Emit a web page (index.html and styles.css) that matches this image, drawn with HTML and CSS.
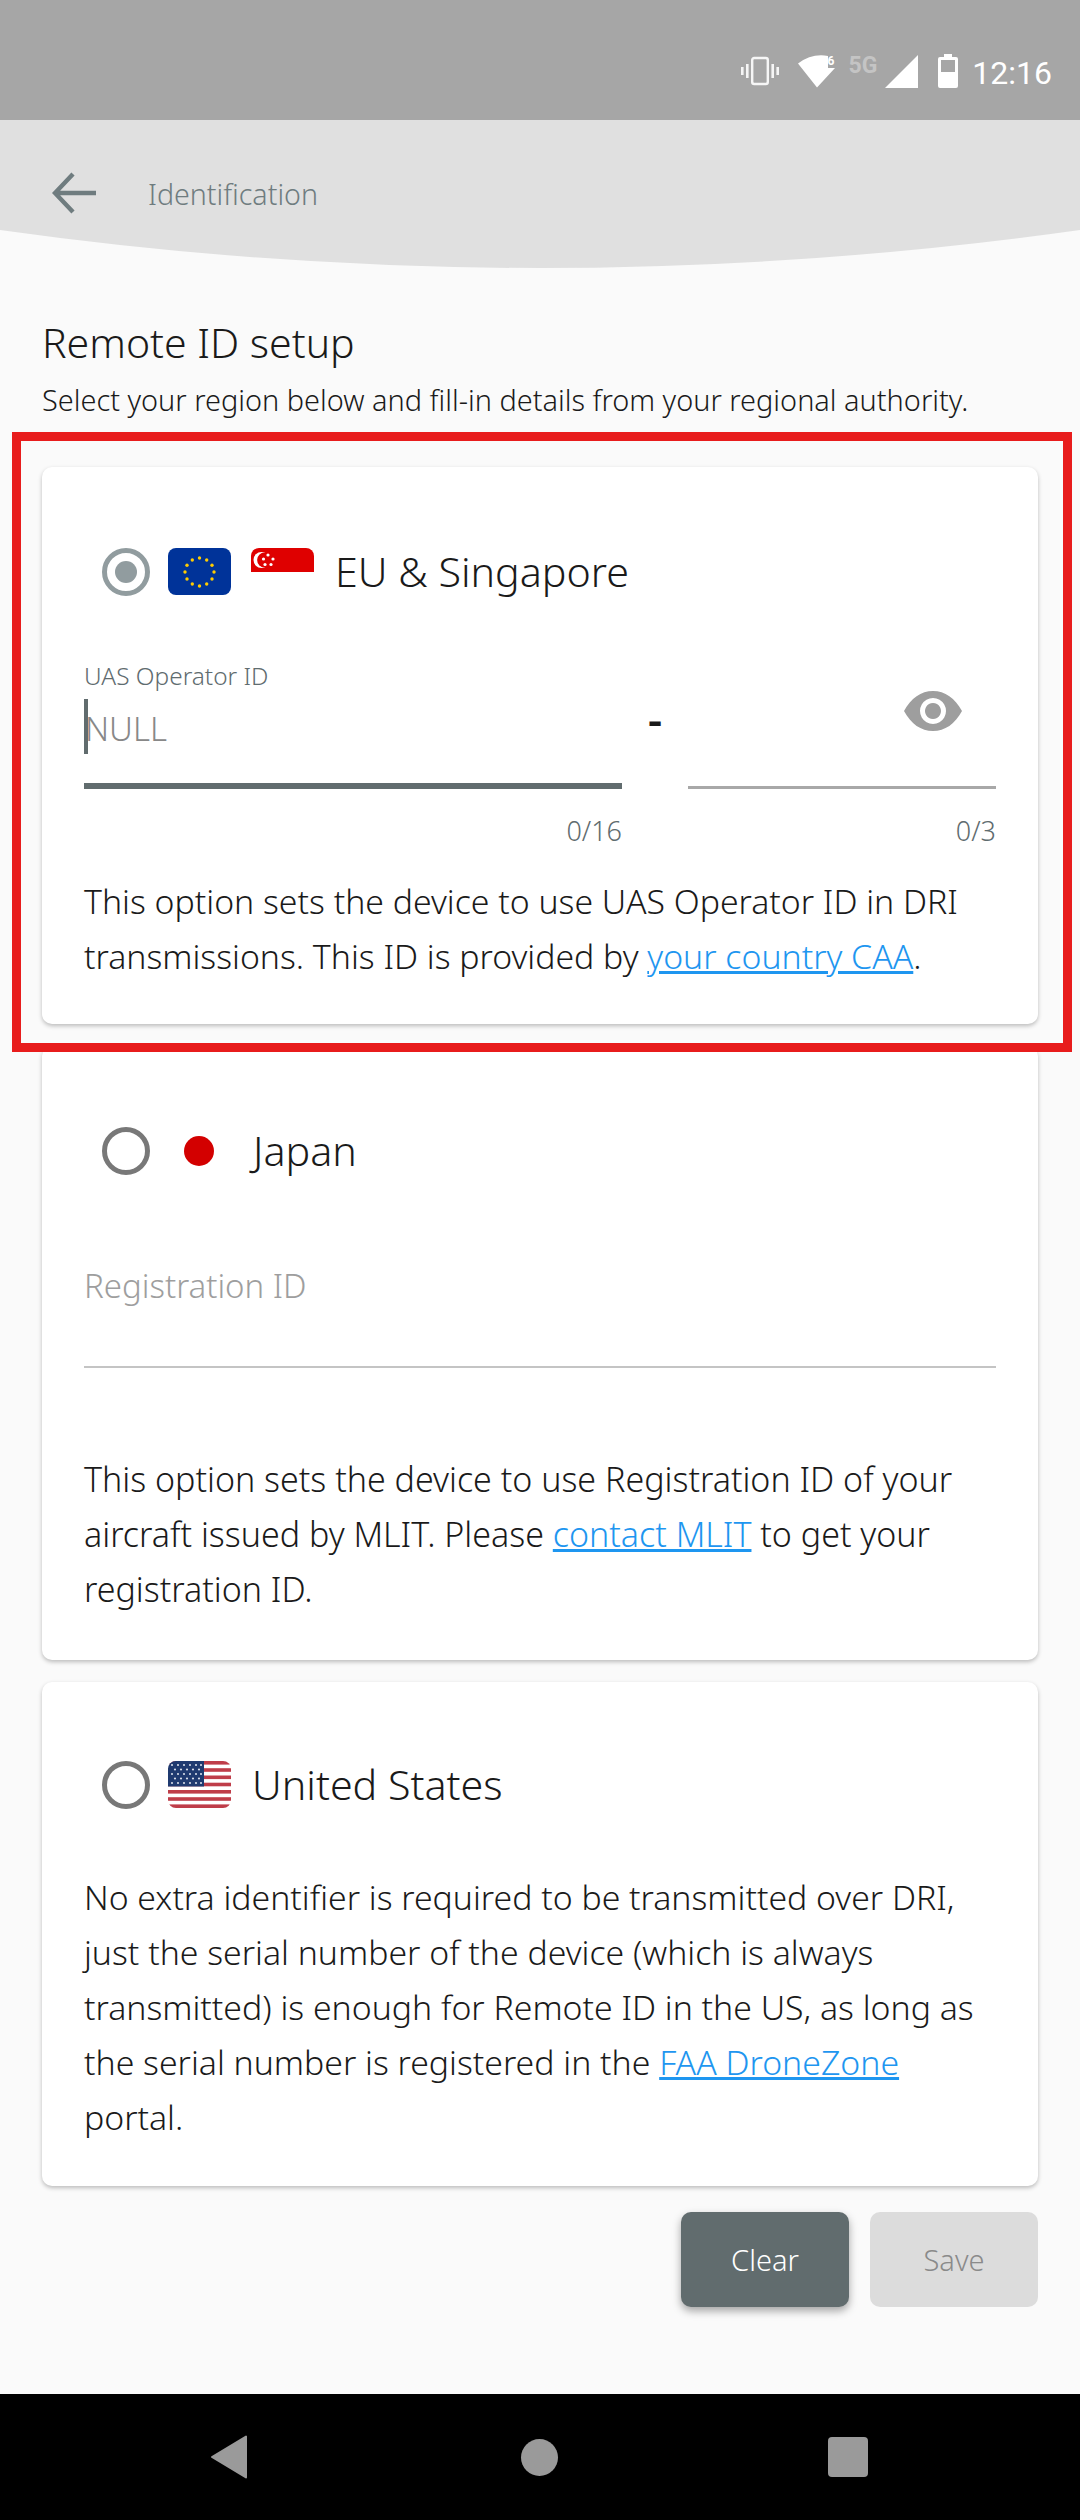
FILE: index.html
```html
<!DOCTYPE html>
<html lang="en">
<head>
<meta charset="utf-8">
<title>Remote ID setup</title>
<link rel="stylesheet" href="styles.css">
</head>
<body>
<div class="phone">
  <div class="statusbar">
    <svg class="st-vib" viewBox="0 0 38 30" width="38" height="30"><g fill="none" stroke="#fff" stroke-width="2.4" opacity=".9"><rect x="11.2" y="2" width="15.6" height="26" rx="2"/></g><g fill="#fff" opacity=".9"><rect x="5" y="8" width="2.6" height="14"/><rect x="0" y="11" width="2.6" height="8"/><rect x="30.4" y="8" width="2.6" height="14"/><rect x="35.4" y="11" width="2.6" height="8"/></g></svg>
    <svg class="st-wifi" viewBox="0 0 38 33" width="38" height="33"><path d="M0 8.500 Q14 -2 30 1 V13 H37 L19 32.500 Z" fill="#fff"/></svg>
    <span class="st-six">6</span>
    <span class="st-5g">5G</span>
    <svg class="st-signal" viewBox="0 0 33 33" width="33" height="33"><path d="M33 0V33H0Z" fill="#fff"/></svg>
    <svg class="st-batt" viewBox="0 0 20 34" width="20" height="34"><path d="M6 0h8v3h4a2 2 0 0 1 2 2v27a2 2 0 0 1-2 2H2a2 2 0 0 1-2-2V5a2 2 0 0 1 2-2h4z" fill="#fff"/><rect x="3" y="6" width="14" height="12" fill="#a6a6a6"/></svg>
    <span class="st-time">12:16</span>
  </div>
  <header class="appbar">
    <svg class="back" viewBox="0 0 44 44" width="44" height="44"><path d="M21 3 L3 22 L21 41 M3 22 H44" fill="none" stroke="#6f7c7f" stroke-width="4.4"/></svg>
    <span class="appbar-title">Identification</span>
  </header>
  <svg class="curve" viewBox="0 0 1080 38" width="1080" height="38" preserveAspectRatio="none"><path d="M0 0 Q540 76 1080 0 V0 H0Z" fill="#e0e0e0"/></svg>
  <main class="content">
    <h1 class="heading">Remote ID setup</h1>
    <p class="sub">Select your region below and fill-in details from your regional authority.</p>

    <section class="card card-eu">
      <div class="card-head">
        <span class="radio radio-on"></span>
        <svg class="flag" viewBox="0 0 63 47" width="63" height="47"><rect width="63" height="47" rx="8" fill="#003399"/><g fill="#ffcc00"><circle cx="31.5" cy="10" r="1.7"/><circle cx="38.7" cy="12" r="1.7"/><circle cx="44" cy="17.2" r="1.7"/><circle cx="46" cy="24" r="1.7"/><circle cx="44" cy="31" r="1.7"/><circle cx="38.7" cy="36" r="1.7"/><circle cx="31.5" cy="38" r="1.7"/><circle cx="24.3" cy="36" r="1.7"/><circle cx="19" cy="31" r="1.7"/><circle cx="17" cy="24" r="1.7"/><circle cx="19" cy="17.2" r="1.7"/><circle cx="24.3" cy="12" r="1.7"/></g></svg>
        <svg class="flag flag-sg" viewBox="0 0 63 47" width="63" height="47"><path d="M0 24V8a8 8 0 0 1 8-8h47a8 8 0 0 1 8 8v16z" fill="#df0000"/><circle cx="10.5" cy="12" r="8" fill="#fff"/><circle cx="13.5" cy="12" r="7.4" fill="#df0000"/><g fill="#fff"><circle cx="17" cy="7" r="1.6"/><circle cx="22" cy="11" r="1.6"/><circle cx="20" cy="16.500" r="1.6"/><circle cx="14" cy="16.500" r="1.6"/><circle cx="12.500" cy="11" r="1.6"/></g></svg>
        <span class="card-name">EU &amp; Singapore</span>
      </div>
      <div class="fields">
        <div class="field field-main">
          <div class="field-label">UAS Operator ID</div>
          <div class="field-input"><span class="caret"></span><span class="placeholder">NULL</span></div>
          <div class="field-count">0/16</div>
        </div>
        <div class="dash">-</div>
        <div class="field field-small">
          <div class="field-eye">
            <svg viewBox="0 0 58 40" width="58" height="40"><path fill-rule="evenodd" d="M0 20 C 7 7, 17 0, 29 0 S 51 7, 58 20 C 51 33, 41 40, 29 40 S 7 33, 0 20Z M29 7 a13 13 0 1 0 .01 0Z M29 12 a8 8 0 1 1 -.01 0Z" fill="#9e9e9e"/></svg>
          </div>
          <div class="field-count">0/3</div>
        </div>
      </div>
      <p class="desc">This option sets the device to use UAS Operator ID in DRI transmissions. This ID is provided by <a href="#">your country CAA</a>.</p>
    </section>

    <section class="card card-jp">
      <div class="card-head">
        <span class="radio"></span>
        <span class="flag-jp"></span>
        <span class="card-name">Japan</span>
      </div>
      <div class="reg-label">Registration ID</div>
      <p class="desc">This option sets the device to use Registration ID of your aircraft issued by MLIT. Please <a href="#">contact MLIT</a> to get your registration ID.</p>
    </section>

    <section class="card card-us">
      <div class="card-head">
        <span class="radio"></span>
        <svg class="flag" viewBox="0 0 63 47" width="63" height="47"><defs><clipPath id="usclip"><rect width="63" height="47" rx="8"/></clipPath></defs><g clip-path="url(#usclip)"><rect width="63" height="47" fill="#fff"/><g fill="#bf3d49"><rect y="0" width="63" height="3.600"/><rect y="7.200" width="63" height="3.600"/><rect y="14.500" width="63" height="3.600"/><rect y="21.700" width="63" height="3.600"/><rect y="29" width="63" height="3.600"/><rect y="36.200" width="63" height="3.600"/><rect y="43.400" width="63" height="3.600"/></g><rect width="36" height="25.500" fill="#1f3a70"/><g fill="#d5dbe8"><circle cx="4" cy="4" r="1.100"/><circle cx="10" cy="4" r="1.100"/><circle cx="16" cy="4" r="1.100"/><circle cx="22" cy="4" r="1.100"/><circle cx="28" cy="4" r="1.100"/><circle cx="33" cy="4" r="1.100"/><circle cx="7" cy="8.500" r="1.100"/><circle cx="13" cy="8.500" r="1.100"/><circle cx="19" cy="8.500" r="1.100"/><circle cx="25" cy="8.500" r="1.100"/><circle cx="31" cy="8.500" r="1.100"/><circle cx="4" cy="13" r="1.100"/><circle cx="10" cy="13" r="1.100"/><circle cx="16" cy="13" r="1.100"/><circle cx="22" cy="13" r="1.100"/><circle cx="28" cy="13" r="1.100"/><circle cx="33" cy="13" r="1.100"/><circle cx="7" cy="17.500" r="1.100"/><circle cx="13" cy="17.500" r="1.100"/><circle cx="19" cy="17.500" r="1.100"/><circle cx="25" cy="17.500" r="1.100"/><circle cx="31" cy="17.500" r="1.100"/><circle cx="4" cy="22" r="1.100"/><circle cx="10" cy="22" r="1.100"/><circle cx="16" cy="22" r="1.100"/><circle cx="22" cy="22" r="1.100"/><circle cx="28" cy="22" r="1.100"/><circle cx="33" cy="22" r="1.100"/></g></g></svg>
        <span class="card-name">United States</span>
      </div>
      <p class="desc">No extra identifier is required to be transmitted over DRI, just the serial number of the device (which is always transmitted) is enough for Remote ID in the US, as long as the serial number is registered in the <a href="#">FAA DroneZone</a> portal.</p>
    </section>

    <div class="actions">
      <button class="btn btn-clear">Clear</button>
      <button class="btn btn-save">Save</button>
    </div>
  </main>
  <nav class="navbar">
    <svg viewBox="0 0 38 44" width="38" height="44"><path d="M36 1.500 V42.500 L2 22Z" fill="#9a9a9a" stroke="#9a9a9a" stroke-width="2" stroke-linejoin="round"/></svg>
    <span class="nav-home"></span>
    <span class="nav-square"></span>
  </nav>
  <div class="highlight"></div>
</div>
</body>
</html>
```

FILE: styles.css
```css
* { box-sizing: border-box; }
html, body { margin: 0; padding: 0; }
body { font-family: "Noto Sans", "Open Sans", sans-serif; background: #fafafa; }
.phone { position: relative; width: 1080px; height: 2520px; display: flex; flex-direction: column; overflow: hidden; background: #fafafa; }

.statusbar { height: 120px; background: #a6a6a6; display: flex; align-items: center; justify-content: flex-end; padding: 22px 28px 0 0; color: #fff; flex: none; }
.st-vib { margin-right: 19px; }
.st-wifi { margin-right: 0; }
.st-six { font: 700 12px Roboto, sans-serif; margin: -20px 14px 0 -8px; }
.st-5g { font: 700 23px Roboto, sans-serif; color: #c4c4c4; margin: -12px 8px 0 0; }
.st-signal { margin-right: 20px; }
.st-batt { margin-right: 14px; }
.st-time { font: 400 32px Roboto, sans-serif; margin-top: 4px; }

.appbar { height: 110px; background: #e0e0e0; display: flex; align-items: center; padding: 36px 0 0 52px; flex: none; }
.back { margin-right: 52px; }
.appbar-title { font-size: 28.6px; font-weight: 300; color: #6f7c7f; }
.curve { display: block; flex: none; }

.content { flex: 1; padding: 44px 42px 0; display: flex; flex-direction: column; }
.heading { font-size: 41px; font-weight: 300; margin: 0; color: #1a1a1a; line-height: 60px; }
.sub { font-size: 28.900px; font-weight: 300; margin: 6px 0 0; color: #1a1a1a; line-height: 44px; }

.card { background: #fff; border-radius: 10px; box-shadow: 0 2px 4px rgba(0,0,0,.25); padding: 0 42px; flex: none; }
.card-eu { margin-top: 45px; height: 557px; }
.card-jp { margin-top: 22px; height: 614px; padding-top: 81px; }
.card-us { margin-top: 22px; height: 504px; }

.card-head { display: flex; align-items: center; height: 47px; padding-left: 18px; }
.card-eu .card-head { margin-top: 81px; }
.card-us .card-head { margin-top: 79px; }
.card-jp .card-head { margin-top: 0; }
.radio { width: 48px; height: 48px; border-radius: 50%; border: 5px solid #787878; flex: none; margin-right: 18px; }
.radio-on { border-color: #919c9f; position: relative; }
.radio-on::after { content: ""; position: absolute; inset: 8px; border-radius: 50%; background: #919c9f; }
.flag { flex: none; margin-right: 20px; }
.flag-jp { width: 30px; height: 30px; border-radius: 50%; background: #d30000; margin: 0 38px 0 16px; flex: none; }
.card-name { font-size: 41.200px; font-weight: 300; color: #1a1a1a; margin-left: 1px; margin-top: -2px; }

.fields { display: flex; margin-top: 64px; }
.field-main { width: 538px; }
.field-label { font-size: 24.400px; font-weight: 300; color: #5f6c6f; line-height: 34px; }
.field-input { height: 96px; border-bottom: 6px solid #616c6e; display: flex; align-items: flex-start; }
.caret { width: 4px; height: 55px; background: #616c6e; margin-top: 6px; flex: none; }
.placeholder { font-size: 33px; font-weight: 300; color: #888; line-height: 72px; margin-left: -3px; }
.field-count { font-size: 27px; font-weight: 300; color: #5f6c6f; text-align: right; margin-top: 25px; line-height: 34px; }
.dash { width: 66px; font-size: 44px; font-weight: 600; color: #1a1a1a; text-align: center; line-height: 40px; margin-top: 39px; }
.field-small { width: 308px; }
.field-eye { height: 130px; border-bottom: 3px solid #a8a8a8; display: flex; justify-content: flex-end; padding: 32px 34px 0 0; }
.desc { font-size: 33.800px; font-weight: 300; color: #1a1a1a; line-height: 55px; margin: 26px 0 0; }
.desc a { color: #1e96f0; text-decoration: underline; }
.reg-label { font-size: 33px; font-weight: 300; color: #9e9e9e; margin-top: 82px; height: 112px; border-bottom: 2px solid #c4c4c4; line-height: 60px; }
.card-jp .desc { margin-top: 84px; font-size: 34px; }
.card-us .desc { margin-top: 62px; }

.actions { display: flex; justify-content: flex-end; gap: 21px; margin-top: 26px; }
.btn { width: 168px; height: 95px; border: 0; border-radius: 10px; font-family: inherit; font-size: 29px; font-weight: 300; }
.btn-clear { background: #616c6e; color: #fff; box-shadow: 0 4px 8px rgba(0,0,0,.35); }
.btn-save { background: #dcdcdc; color: #8a8a8a; }

.navbar { height: 126px; background: #000; flex: none; display: flex; align-items: center; padding: 0 0 0 210px; }
.nav-home { width: 37px; height: 37px; border-radius: 50%; background: #9a9a9a; margin-left: 273px; }
.nav-square { width: 40px; height: 40px; border-radius: 4px; background: #9a9a9a; margin-left: 270px; }

.highlight { position: absolute; left: 12px; top: 432px; width: 1060px; height: 620px; border: 9px solid #e81c1c; pointer-events: none; }
```
